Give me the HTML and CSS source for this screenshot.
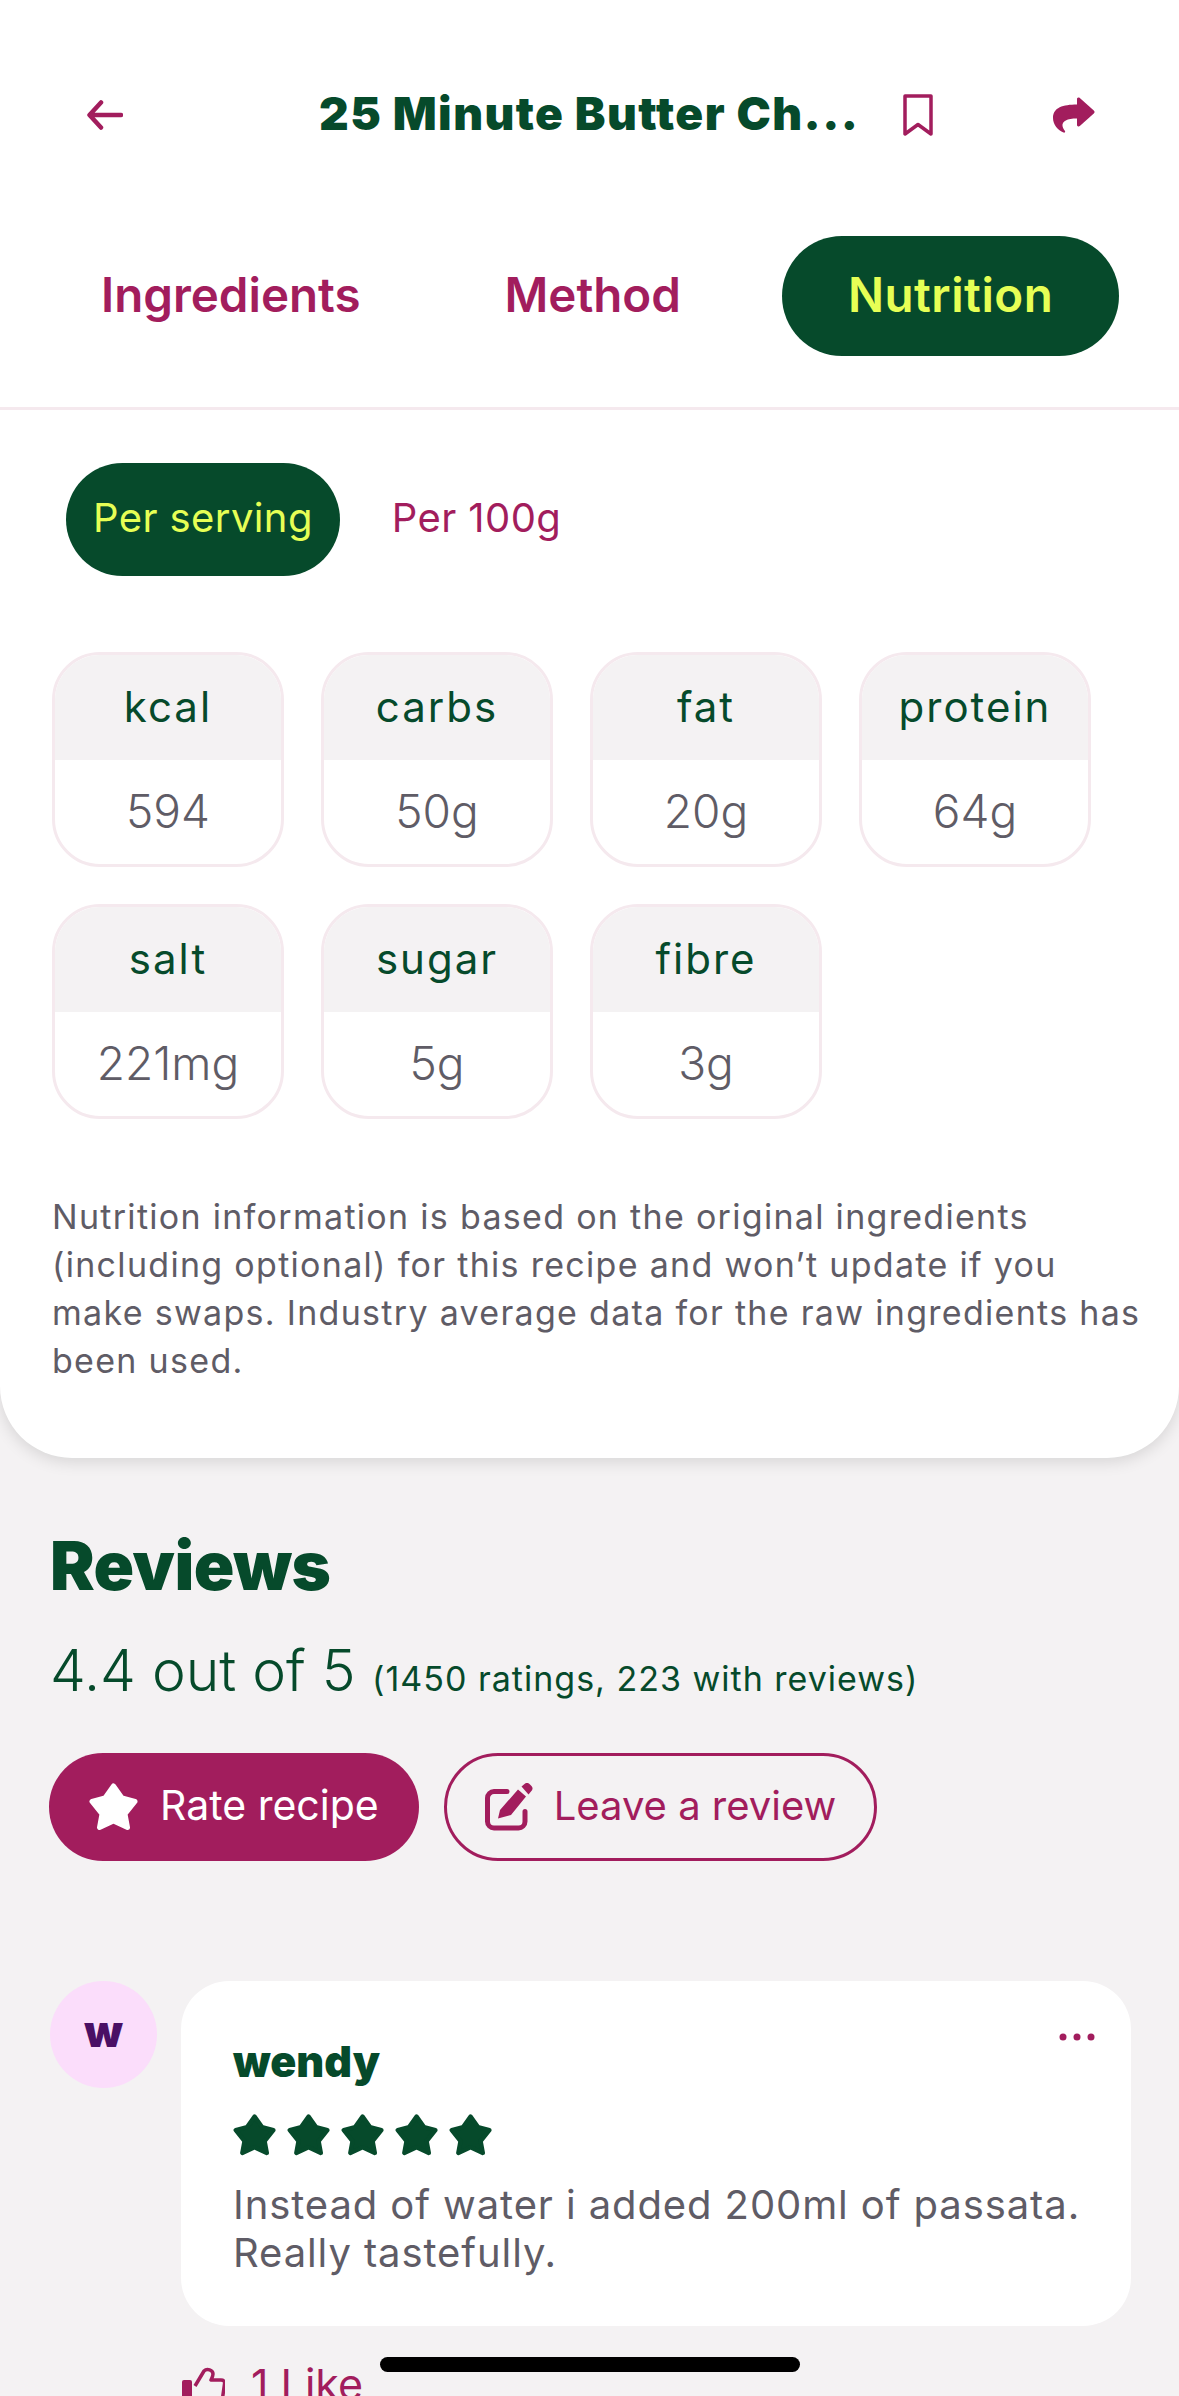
FILE: index.html
```html
<!DOCTYPE html>
<html lang="en">
<head>
  <meta charset="UTF-8">
  <meta name="viewport" content="width=device-width, initial-scale=1.0">
  <title>25 Minute Butter Chicken</title>
  <link rel="stylesheet" href="styles.css">
</head>
<body>
  <div class="page">
    <section class="panel">
      <header class="topbar">
        <svg class="icon-back" viewBox="0 0 36 30" width="36" height="30"><path d="M14 2.500 2.500 15 14 27.500M3 15h31" fill="none" stroke="#A21D5D" stroke-width="4.500" stroke-linecap="round" stroke-linejoin="round"/></svg>
        <h1 class="title">25 Minute Butter Ch...</h1>
        <svg class="icon-bookmark" viewBox="0 0 30 42" width="30" height="42"><path d="M2 2h26v38L15 30.500 2 40z" fill="none" stroke="#A21D5D" stroke-width="3.500" stroke-linejoin="round"/></svg>
        <svg class="icon-share" viewBox="0 0 42 36" width="42" height="36"><path d="M24 1.500c.6-1 1.800-1.200 2.800-.4l14 12.400c1 .9 1 2.100 0 3L26.800 29c-1 .8-2.800.3-2.800-1.100V21.500C14 21.500 9 24 9.500 29c.2 1.800 1.600 3.800 2.500 5 .6 1-.4 2-1.500 1.500C5 33 0 28 0 21 0 10.500 10 7.500 24 7.500z" fill="#A21D5D"/></svg>
      </header>

      <nav class="tabs">
        <a class="tab">Ingredients</a>
        <a class="tab">Method</a>
        <a class="tab tab-active">Nutrition</a>
      </nav>

      <div class="toggle">
        <span class="toggle-item toggle-active">Per serving</span>
        <span class="toggle-item">Per 100g</span>
      </div>

      <div class="nutrients">
        <div class="nutrient"><div class="nutrient-name">kcal</div><div class="nutrient-value">594</div></div>
        <div class="nutrient"><div class="nutrient-name">carbs</div><div class="nutrient-value">50g</div></div>
        <div class="nutrient"><div class="nutrient-name">fat</div><div class="nutrient-value">20g</div></div>
        <div class="nutrient"><div class="nutrient-name">protein</div><div class="nutrient-value">64g</div></div>
        <div class="nutrient"><div class="nutrient-name">salt</div><div class="nutrient-value">221mg</div></div>
        <div class="nutrient"><div class="nutrient-name">sugar</div><div class="nutrient-value">5g</div></div>
        <div class="nutrient"><div class="nutrient-name">fibre</div><div class="nutrient-value">3g</div></div>
      </div>

      <p class="note">Nutrition information is based on the original ingredients (including optional) for this recipe and won’t update if you make swaps. Industry average data for the raw ingredients has been used.</p>
    </section>

    <section class="reviews">
      <h2>Reviews</h2>
      <div class="score"><span class="score-main">4.4 out of 5</span> <span class="score-count">(1450 ratings, 223 with reviews)</span></div>

      <div class="actions">
        <button class="btn btn-fill">
          <svg viewBox="0 0 50 48" width="50" height="48"><path d="M24.500 3 33 15 46 18.500 36 31 38.500 44.500 24.500 38 10.500 44.500 13 31 3 18.500 16 15z" fill="#fff" stroke="#fff" stroke-width="5" stroke-linejoin="round"/></svg>
          <span class="btn-text">Rate recipe</span>
        </button>
        <button class="btn btn-line">
          <svg viewBox="0 0 48 48" width="48" height="48"><path d="M22 8.500H9A6.500 6.500 0 0 0 2.500 15v23.500A6.500 6.500 0 0 0 9 45h24.500a6.500 6.500 0 0 0 6.500-6.500v-10" fill="none" stroke="#A21D5D" stroke-width="5" stroke-linecap="round"/><path d="M13 35.500 15 27 33 6.500 41 13.500 26 32zM36.500 3.500l3-2.500a4 4 0 0 1 5.500.5l1.500 1.500a4 4 0 0 1-.5 5.500l-2.500 3z" fill="#A21D5D"/></svg>
          <span class="btn-text">Leave a review</span>
        </button>
      </div>

      <div class="review">
        <div class="avatar">w</div>
        <div class="review-body">
          <div class="review-card">
            <svg class="dots" viewBox="0 0 36 8" width="36" height="8"><circle cx="4" cy="4" r="3.500" fill="#A21D5D"/><circle cx="18" cy="4" r="3.500" fill="#A21D5D"/><circle cx="32" cy="4" r="3.500" fill="#A21D5D"/></svg>
            <div class="review-name">wendy</div>
            <div class="stars">
              <svg viewBox="0 0 50 48" width="44" height="42"><path d="M24.500 3 33 15 46 18.500 36 31 38.500 44.500 24.500 38 10.500 44.500 13 31 3 18.500 16 15z" fill="#064A2B" stroke="#064A2B" stroke-width="5" stroke-linejoin="round"/></svg>
              <svg viewBox="0 0 50 48" width="44" height="42"><path d="M24.500 3 33 15 46 18.500 36 31 38.500 44.500 24.500 38 10.500 44.500 13 31 3 18.500 16 15z" fill="#064A2B" stroke="#064A2B" stroke-width="5" stroke-linejoin="round"/></svg>
              <svg viewBox="0 0 50 48" width="44" height="42"><path d="M24.500 3 33 15 46 18.500 36 31 38.500 44.500 24.500 38 10.500 44.500 13 31 3 18.500 16 15z" fill="#064A2B" stroke="#064A2B" stroke-width="5" stroke-linejoin="round"/></svg>
              <svg viewBox="0 0 50 48" width="44" height="42"><path d="M24.500 3 33 15 46 18.500 36 31 38.500 44.500 24.500 38 10.500 44.500 13 31 3 18.500 16 15z" fill="#064A2B" stroke="#064A2B" stroke-width="5" stroke-linejoin="round"/></svg>
              <svg viewBox="0 0 50 48" width="44" height="42"><path d="M24.500 3 33 15 46 18.500 36 31 38.500 44.500 24.500 38 10.500 44.500 13 31 3 18.500 16 15z" fill="#064A2B" stroke="#064A2B" stroke-width="5" stroke-linejoin="round"/></svg>
            </div>
            <p class="review-text">Instead of water i added 200ml of passata. Really tastefully.</p>
          </div>
          <div class="like">
            <svg viewBox="0 0 44 44" width="44" height="44"><path d="M1 15a2 2 0 0 1 2-2h6a2 2 0 0 1 2 2v29H1z" fill="#A21D5D"/><path d="M14 19 23 4c3-3 9-1 9 3 0 2-1 4-2 6h10c3 0 4 2 3.500 4l-3.500 25H14" fill="none" stroke="#A21D5D" stroke-width="3.500" stroke-linejoin="round"/></svg>
            <span class="like-text">1 Like</span>
          </div>
        </div>
      </div>
    </section>

    <div class="home-bar"></div>
  </div>
</body>
</html>
```

FILE: styles.css
```css
body {
  margin: 0;
  font-family: "Inter", "Liberation Sans", sans-serif;
  color: #5F5C66;
}

.page {
  position: relative;
  width: 1179px;
  height: 2396px;
  overflow: hidden;
  background-color: #F4F2F3;
}

/* Top white panel */
.panel {
  height: 1458px;
  box-sizing: border-box;
  background-color: #FFFFFF;
  border-radius: 0 0 72px 72px;
  box-shadow: 0 4px 16px rgba(0, 0, 0, 0.12);
}

.topbar {
  display: flex;
  align-items: center;
  height: 230px;
  padding: 0 84px 0 87px;
  box-sizing: border-box;
}

.title {
  width: 545px;
  margin: 0 0 5px 196px;
  font-size: 46px;
  font-weight: 900;
  letter-spacing: 1.4px;
  color: #064A2B;
  white-space: nowrap;
}

.icon-bookmark {
  margin-left: 39px;
}

.icon-share {
  margin-left: auto;
}

.tabs {
  display: flex;
  align-items: flex-start;
  gap: 12px;
  height: 180px;
  padding: 6px 0 0 35px;
  box-sizing: border-box;
  border-bottom: 3px solid #F5E9EE;
}

.tab {
  height: 120px;
  padding: 0 66px;
  border-radius: 60px;
  box-sizing: border-box;
  line-height: 118px;
  font-size: 47.5px;
  font-weight: 600;
  color: #A21D5D;
}

.tab-active {
  margin-left: 23px;
  background-color: #064A2B;
  letter-spacing: 0.5px;
  color: #E6FF55;
}

.toggle {
  display: flex;
  gap: 25px;
  margin: 53px 0 0 66px;
}

.toggle-item {
  height: 113px;
  padding: 0 27px;
  border-radius: 57px;
  line-height: 110px;
  font-size: 40px;
  letter-spacing: 0.4px;
  color: #A21D5D;
}

.toggle-active {
  background-color: #064A2B;
  color: #E6FF55;
}

.nutrients {
  display: grid;
  grid-template-columns: repeat(4, 232px);
  grid-auto-rows: 215px;
  column-gap: 37px;
  row-gap: 37px;
  margin: 76px 0 0 52px;
}

.nutrient {
  border: 3px solid #F5E9EE;
  border-radius: 48px;
  overflow: hidden;
  text-align: center;
}

.nutrient-name {
  height: 105px;
  line-height: 104px;
  background-color: #F4F2F3;
  font-size: 42px;
  letter-spacing: 2px;
  color: #064A2B;
}

.nutrient-value {
  line-height: 102px;
  font-size: 46px;
  font-weight: 300;
}

.note {
  width: 1100px;
  margin: 74px 0 0 52px;
  font-size: 34px;
  line-height: 48px;
  letter-spacing: 1.3px;
}

/* Reviews */
.reviews {
  padding: 68px 48px 0 50px;
}

.reviews h2 {
  margin: 0;
  font-size: 67px;
  font-weight: 900;
  letter-spacing: -0.5px;
  line-height: 80px;
  color: #064A2B;
}

.score {
  margin-top: 30px;
  color: #064A2B;
}

.score-main {
  font-size: 57px;
  font-weight: 300;
}

.score-count {
  margin-left: 12px;
  font-size: 34px;
  letter-spacing: 1px;
}

.actions {
  display: flex;
  gap: 25px;
  margin: 48px 0 0 -1px;
}

.btn {
  display: flex;
  align-items: center;
  gap: 21px;
  height: 108px;
  border-radius: 54px;
  box-sizing: border-box;
  font-family: inherit;
  font-size: 41px;
}

.btn-text {
  margin-bottom: 4px;
}

.btn-fill {
  padding: 0 40px;
  border: none;
  background-color: #A21D5D;
  color: #FFFFFF;
}

.btn-line {
  padding: 0 38px;
  border: 3px solid #A21D5D;
  background-color: transparent;
  font-size: 40px;
  color: #A21D5D;
}

.review {
  display: flex;
  gap: 24px;
  margin-top: 120px;
}

.avatar {
  flex: none;
  width: 107px;
  height: 107px;
  border-radius: 50%;
  background-color: #FBDDFB;
  text-align: center;
  line-height: 100px;
  font-size: 44px;
  font-weight: 900;
  color: #4A1065;
}

.review-body {
  flex: 1;
}

.review-card {
  position: relative;
  height: 345px;
  padding: 54px 30px 0 52px;
  box-sizing: border-box;
  background-color: #FFFFFF;
  border-radius: 48px;
}

.dots {
  position: absolute;
  top: 52px;
  right: 36px;
}

.review-name {
  font-size: 43px;
  font-weight: 900;
  color: #064A2B;
}

.stars {
  display: flex;
  gap: 10px;
  margin-top: 27px;
}

.review-text {
  margin: 25px 0 0;
  font-size: 40px;
  letter-spacing: 0.9px;
  line-height: 48px;
}

.like {
  display: flex;
  align-items: flex-start;
  gap: 26px;
  margin-top: 41px;
  color: #A21D5D;
}

.like-text {
  font-size: 43px;
  line-height: 34px;
}

.home-bar {
  position: absolute;
  left: 380px;
  top: 2357px;
  width: 420px;
  height: 15px;
  border-radius: 8px;
  background-color: #000000;
}
```
